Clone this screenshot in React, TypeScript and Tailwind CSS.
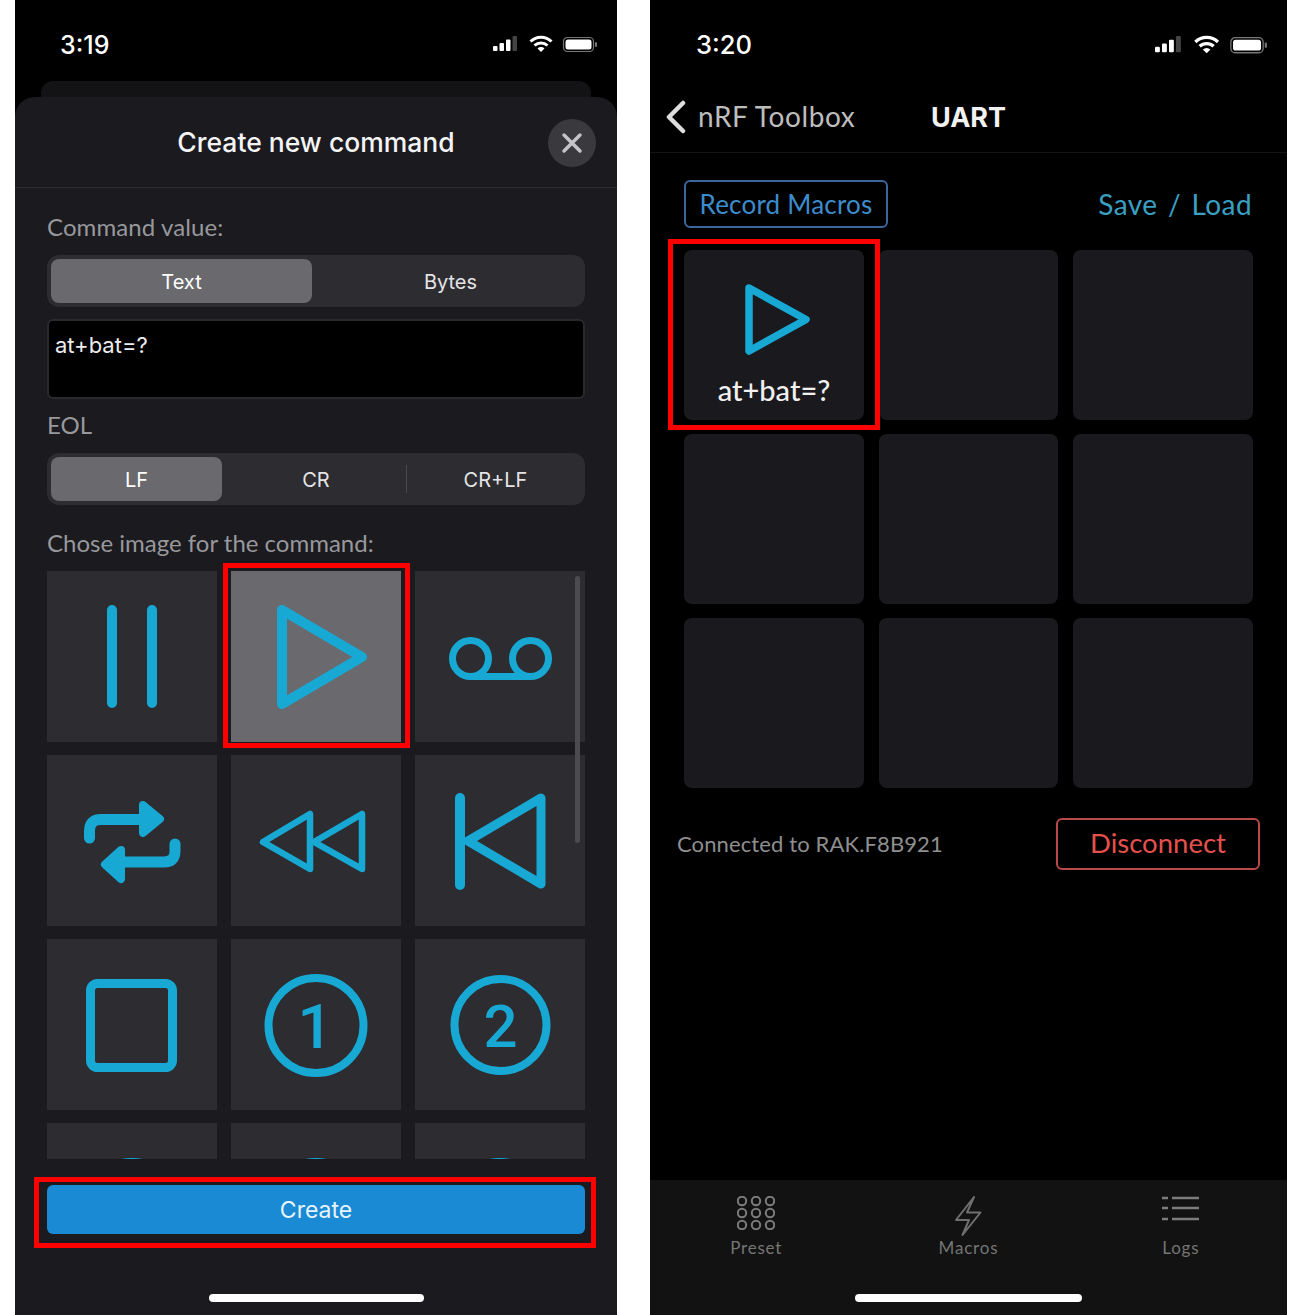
const CYAN = "#18a8d4";

function StatusIcons({ width }: { width: number }) {
  return (
    <svg width={width} viewBox="0 0 105 20" className="-mt-[1px] block">
      <rect x="0" y="11" width="4.5" height="5" rx="1" fill="#fff" />
      <rect x="6.5" y="8" width="4.5" height="8" rx="1" fill="#fff" />
      <rect x="13" y="4.5" width="4.5" height="11.5" rx="1" fill="#fff" />
      <rect x="19.5" y="1" width="4.5" height="15" rx="1" fill="#444" />
      <path d="M37.5 6.5 a15 15 0 0 1 21 0" fill="none" stroke="#fff" strokeWidth="3" />
      <path d="M41.5 10.5 a9.5 9.5 0 0 1 13 0" fill="none" stroke="#fff" strokeWidth="3" />
      <path d="M44.5 13.5 L48 17 L51.5 13.5 a5 5 0 0 0 -7 0 Z" fill="#fff" />
      <rect x="70.5" y="2.5" width="30" height="14" rx="4" fill="none" stroke="#777" strokeWidth="1.2" />
      <rect x="72.5" y="4.5" width="26" height="10" rx="2.5" fill="#fff" />
      <rect x="102" y="7" width="2" height="5" rx="1" fill="#777" />
    </svg>
  );
}

function Segmented({ items, columns, divider }: { items: string[]; columns: string; divider?: boolean }) {
  return (
    <div className={`grid h-[52px] rounded-xl bg-[#2c2c31] p-1 ${columns}`}>
      {items.map((item, i) => (
        <div
          key={item}
          className={`relative flex items-center justify-center rounded-lg pt-[2px] text-[20px] text-[#e4e4e6] ${
            i === 0 ? "bg-[#69696e] text-white" : ""
          } ${item === "Bytes" ? "pl-2" : ""}`}
        >
          {item}
          {divider && i === 2 && <span className="absolute -left-[4px] top-2 h-7 w-px bg-[#4a4a4e]" />}
        </div>
      ))}
    </div>
  );
}

function Icon({ children }: { children?: React.ReactNode }) {
  return (
    <svg
      viewBox="0 0 170 171"
      className="block h-[171px] w-[170px]"
      fill="none"
      stroke={CYAN}
      strokeLinecap="round"
      strokeLinejoin="round"
    >
      {children}
    </svg>
  );
}

const playPath = <path d="M51 39 L131 86 L51 133 Z" strokeWidth="10" />;

const commandIcons = [
  <g strokeWidth="10" key="pause">
    <path d="M65 39 V132" />
    <path d="M105 39 V132" />
  </g>,
  playPath,
  <g strokeWidth="7" key="voicemail">
    <circle cx="55.5" cy="87.5" r="18" />
    <circle cx="115.5" cy="87.5" r="18" />
    <path d="M55.5 105.5 H115.5" />
  </g>,
  <g key="repeat">
    <path d="M42.5 83 V76 Q42.5 64.5 54 64.5 H100" strokeWidth="11" />
    <path d="M96 50 L113 64 L96 78 Z" strokeWidth="8" fill={CYAN} />
    <path d="M128 89 V96 Q128 107 117 107 H70" strokeWidth="11" />
    <path d="M74 95 L58 109.5 L74 124 Z" strokeWidth="8" fill={CYAN} />
  </g>,
  <g strokeWidth="6.5" key="rewind">
    <path d="M32 87 L79 59 V114 Z" />
    <path d="M83 87 L131 59 V114 Z" />
  </g>,
  <g key="skip">
    <path d="M45 43 V130" strokeWidth="10" />
    <path d="M53 86 L126 43 V129 Z" strokeWidth="9" />
  </g>,
  <rect x="43.5" y="44.5" width="82" height="84" rx="7" strokeWidth="9" key="stop" />,
  <g key="one">
    <circle cx="85" cy="86.5" r="47.5" strokeWidth="8" />
    <text x="84" y="109" textAnchor="middle" fontSize="62" fontWeight="500" fontFamily="Roboto, sans-serif" fill={CYAN} stroke="none">
      1
    </text>
  </g>,
  <g key="two">
    <circle cx="85.5" cy="86" r="46" strokeWidth="8" />
    <text x="85.5" y="108" textAnchor="middle" fontSize="60" fontWeight="500" fontFamily="Roboto, sans-serif" fill={CYAN} stroke="none">
      2
    </text>
  </g>,
  <circle cx="85" cy="86" r="47" strokeWidth="8" key="a" />,
  <circle cx="85" cy="86" r="47" strokeWidth="8" key="b" />,
  <circle cx="85" cy="86" r="47" strokeWidth="8" key="c" />,
];

function CommandSheet() {
  return (
    <div className="flex h-[1315px] w-[602px] flex-col bg-black">
      <div className="flex h-[81px] items-start justify-between pl-[45px] pr-[19px] pt-[36px]">
        <span className="text-[25px] font-medium leading-[18px] text-white">3:19</span>
        <StatusIcons width={105} />
      </div>
      <div className="mx-[26px] h-4 rounded-t-xl bg-[#131316]" />
      <div className="flex flex-1 flex-col rounded-t-[20px] bg-[#1a1a1f]">
        <div className="grid h-[91px] grid-cols-[1fr_auto_1fr] items-center border-b border-[#2c2c31] pt-[2px]">
          <div />
          <h1 className="text-[26.5px] font-medium text-[#f4f4f5]">Create new command</h1>
          <button className="mr-[21px] flex h-[48px] w-[48px] items-center justify-center justify-self-end rounded-full bg-[#3a3a3e]">
            <svg width="22" height="22" viewBox="0 0 22 22" stroke="#c4c4c8" strokeWidth="3.5" strokeLinecap="round">
              <path d="M3 3 L19 19 M19 3 L3 19" />
            </svg>
          </button>
        </div>

        <div className="flex flex-col px-8">
          <label className="mt-[25px] h-7 font-['Lato',sans-serif] text-[24px] leading-7 tracking-[0.1px] text-[#98989c]">
            Command value:
          </label>
          <div className="mt-[14px]">
            <Segmented items={["Text", "Bytes"]} columns="grid-cols-[261px_1fr]" />
          </div>
          <div className="mt-3 h-20 rounded-md border-2 border-[#2a2a2e] bg-black px-[6px] pt-[10px] text-[22px] leading-7 text-[#ececee]">
            at+bat=?
          </div>
          <label className="mt-3 h-7 font-['Lato',sans-serif] text-[24px] leading-7 text-[#98989c]">EOL</label>
          <div className="mt-[14px]">
            <Segmented items={["LF", "CR", "CR+LF"]} columns="grid-cols-[171px_188px_1fr]" divider />
          </div>
          <label className="mt-6 h-7 font-['Lato',sans-serif] text-[24px] leading-7 text-[#98989c]">
            Chose image for the command:
          </label>

          <div className="relative -mx-[10px] mt-[6px] h-[596px] overflow-hidden px-[10px] pt-2">
            <div className="grid grid-cols-3 gap-x-[14px] gap-y-[13px]">
              {commandIcons.map((icon, i) => (
                <div key={i} className={`relative h-[171px] ${i === 1 ? "bg-[#69696e]" : "bg-[#2c2c31]"}`}>
                  <Icon>{icon}</Icon>
                  {i === 1 && (
                    <div className="absolute -bottom-[6px] -left-2 -right-[9px] -top-2 border-[5px] border-[#ff0000]" />
                  )}
                </div>
              ))}
            </div>
            <div className="absolute left-[538px] top-[13px] h-[267px] w-[5px] rounded-full bg-[#4c4c50]" />
          </div>

          <div className="relative mt-[26px]">
            <button className="block h-[49px] w-full rounded-md bg-[#1a8ad4] pt-[2px] text-[23px] text-[#e8f4fb]">Create</button>
            <div className="absolute -bottom-[14px] -left-[13px] -right-[11px] -top-2 border-[5px] border-[#ff0000]" />
          </div>
        </div>

        <div className="mx-auto mt-[60px] h-2 w-[215px] rounded-full bg-white" />
      </div>
    </div>
  );
}

function TabBar() {
  return (
    <div className="mt-auto flex h-[135px] flex-col bg-[#121212]">
      <div className="grid h-[114px] grid-cols-3 pt-[16px] text-center font-['Lato',sans-serif] text-[17px] leading-[20px] tracking-[0.8px] text-[#757575]">
        <div className="flex flex-col items-center">
          <svg width="38" height="34" viewBox="0 0 38 34" fill="none" stroke="#7c7c7c" strokeWidth="2">
            {[5, 19, 33].map((cx) =>
              [5, 17, 29].map((cy) => <circle key={`${cx}-${cy}`} cx={cx} cy={cy} r="4.2" />)
            )}
          </svg>
          <span className="mt-2">Preset</span>
        </div>
        <div className="-mt-[1px] flex flex-col items-center">
          <svg width="29" height="42" viewBox="-2 -2 29 42" fill="none" stroke="#6f6f6f" strokeWidth="2" strokeLinejoin="round">
            <path d="M18 0 L0 23 H13 L6.5 38 L24.5 15.5 H11 Z" />
          </svg>
          <span className="mt-[1px]">Macros</span>
        </div>
        <div className="flex flex-col items-center">
          <svg width="38" height="34" viewBox="0 0 38 34" fill="none" stroke="#7c7c7c" strokeWidth="2.5">
            <path d="M0 2 H6 M10 2 H37 M0 12 H6 M10 12 H37 M0 23 H6 M10 23 H37" />
          </svg>
          <span className="mt-2">Logs</span>
        </div>
      </div>
      <div className="mx-auto h-2 w-[227px] rounded-full bg-white" />
    </div>
  );
}

function UartScreen() {
  return (
    <div className="flex h-[1315px] w-[637px] flex-col bg-black">
      <div className="flex h-[81px] items-start justify-between pl-[46px] pr-[19px] pt-[36px]">
        <span className="text-[25.5px] font-medium leading-[18px] text-white">3:20</span>
        <StatusIcons width={113} />
      </div>
      <div className="grid h-[72px] grid-cols-[1fr_auto_1fr] items-center border-b border-[#141414] pt-[2px]">
        <div className="flex items-center pl-[15px]">
          <svg width="22" height="34" viewBox="0 0 22 34" fill="none" stroke="#dedede" strokeWidth="4.5" strokeLinecap="round" strokeLinejoin="round" className="-mt-[1px]">
            <path d="M18 3 L4 17 L18 31" />
          </svg>
          <span className="-mt-1 ml-[11px] font-['Lato',sans-serif] text-[28px] tracking-[0.6px] text-[#bdbdbd]">nRF Toolbox</span>
        </div>
        <span className="pt-[2px] text-[27px] font-bold text-[#f2f2f2]">UART</span>
        <div />
      </div>

      <div className="mt-[27px] flex items-center justify-between pl-[34px] pr-[35px]">
        <button className="flex h-12 w-[204px] items-center justify-center rounded-md border-2 border-[#3a669c] font-['Lato',sans-serif] text-[26px] tracking-[0.2px] text-[#3c8ccc]">
          Record Macros
        </button>
        <span className="font-['Lato',sans-serif] text-[28px] tracking-[0.4px] text-[#3aa0c2] [word-spacing:3px]">Save / Load</span>
      </div>

      <div className="mt-[22px] grid grid-cols-[180px_179px_180px] gap-x-[15px] gap-y-[14px] pl-[34px]">
        <div className="relative flex h-[170px] flex-col items-center rounded-lg bg-[#1a1a1e] pt-[33px]">
          <svg width="68" height="73" viewBox="0 0 68 73" fill="none" stroke={CYAN} strokeWidth="7.5" strokeLinejoin="round" strokeLinecap="round" className="ml-2">
            <path d="M5 5 L62 36.5 L5 68 Z" />
          </svg>
          <span className="mt-[16px] font-['Lato',sans-serif] text-[29px] font-medium leading-[36px] text-[#f0f0f0]">at+bat=?</span>
          <div className="absolute -bottom-[10px] -left-4 -right-4 -top-[11px] border-[5px] border-[#ff0000]" />
        </div>
        {Array.from({ length: 8 }, (_, i) => (
          <div key={i} className="h-[170px] rounded-lg bg-[#1a1a1e]" />
        ))}
      </div>

      <div className="mt-[30px] flex items-center justify-between px-[27px]">
        <span className="pb-[2px] font-['Lato',sans-serif] text-[22px] tracking-[0.12px] text-[#8f8f8f]">Connected to RAK.F8B921</span>
        <button className="flex h-[52px] w-[204px] items-center justify-center rounded-md border-2 border-[#b94a4a] pb-[2px] font-['Lato',sans-serif] text-[27.5px] text-[#e5504c]">
          Disconnect
        </button>
      </div>

      <TabBar />
    </div>
  );
}

export default function App() {
  return (
    <div className="flex h-[1315px] w-[1300px] gap-[33px] overflow-hidden bg-white pl-[15px] font-['Inter',sans-serif]">
      <CommandSheet />
      <UartScreen />
    </div>
  );
}
